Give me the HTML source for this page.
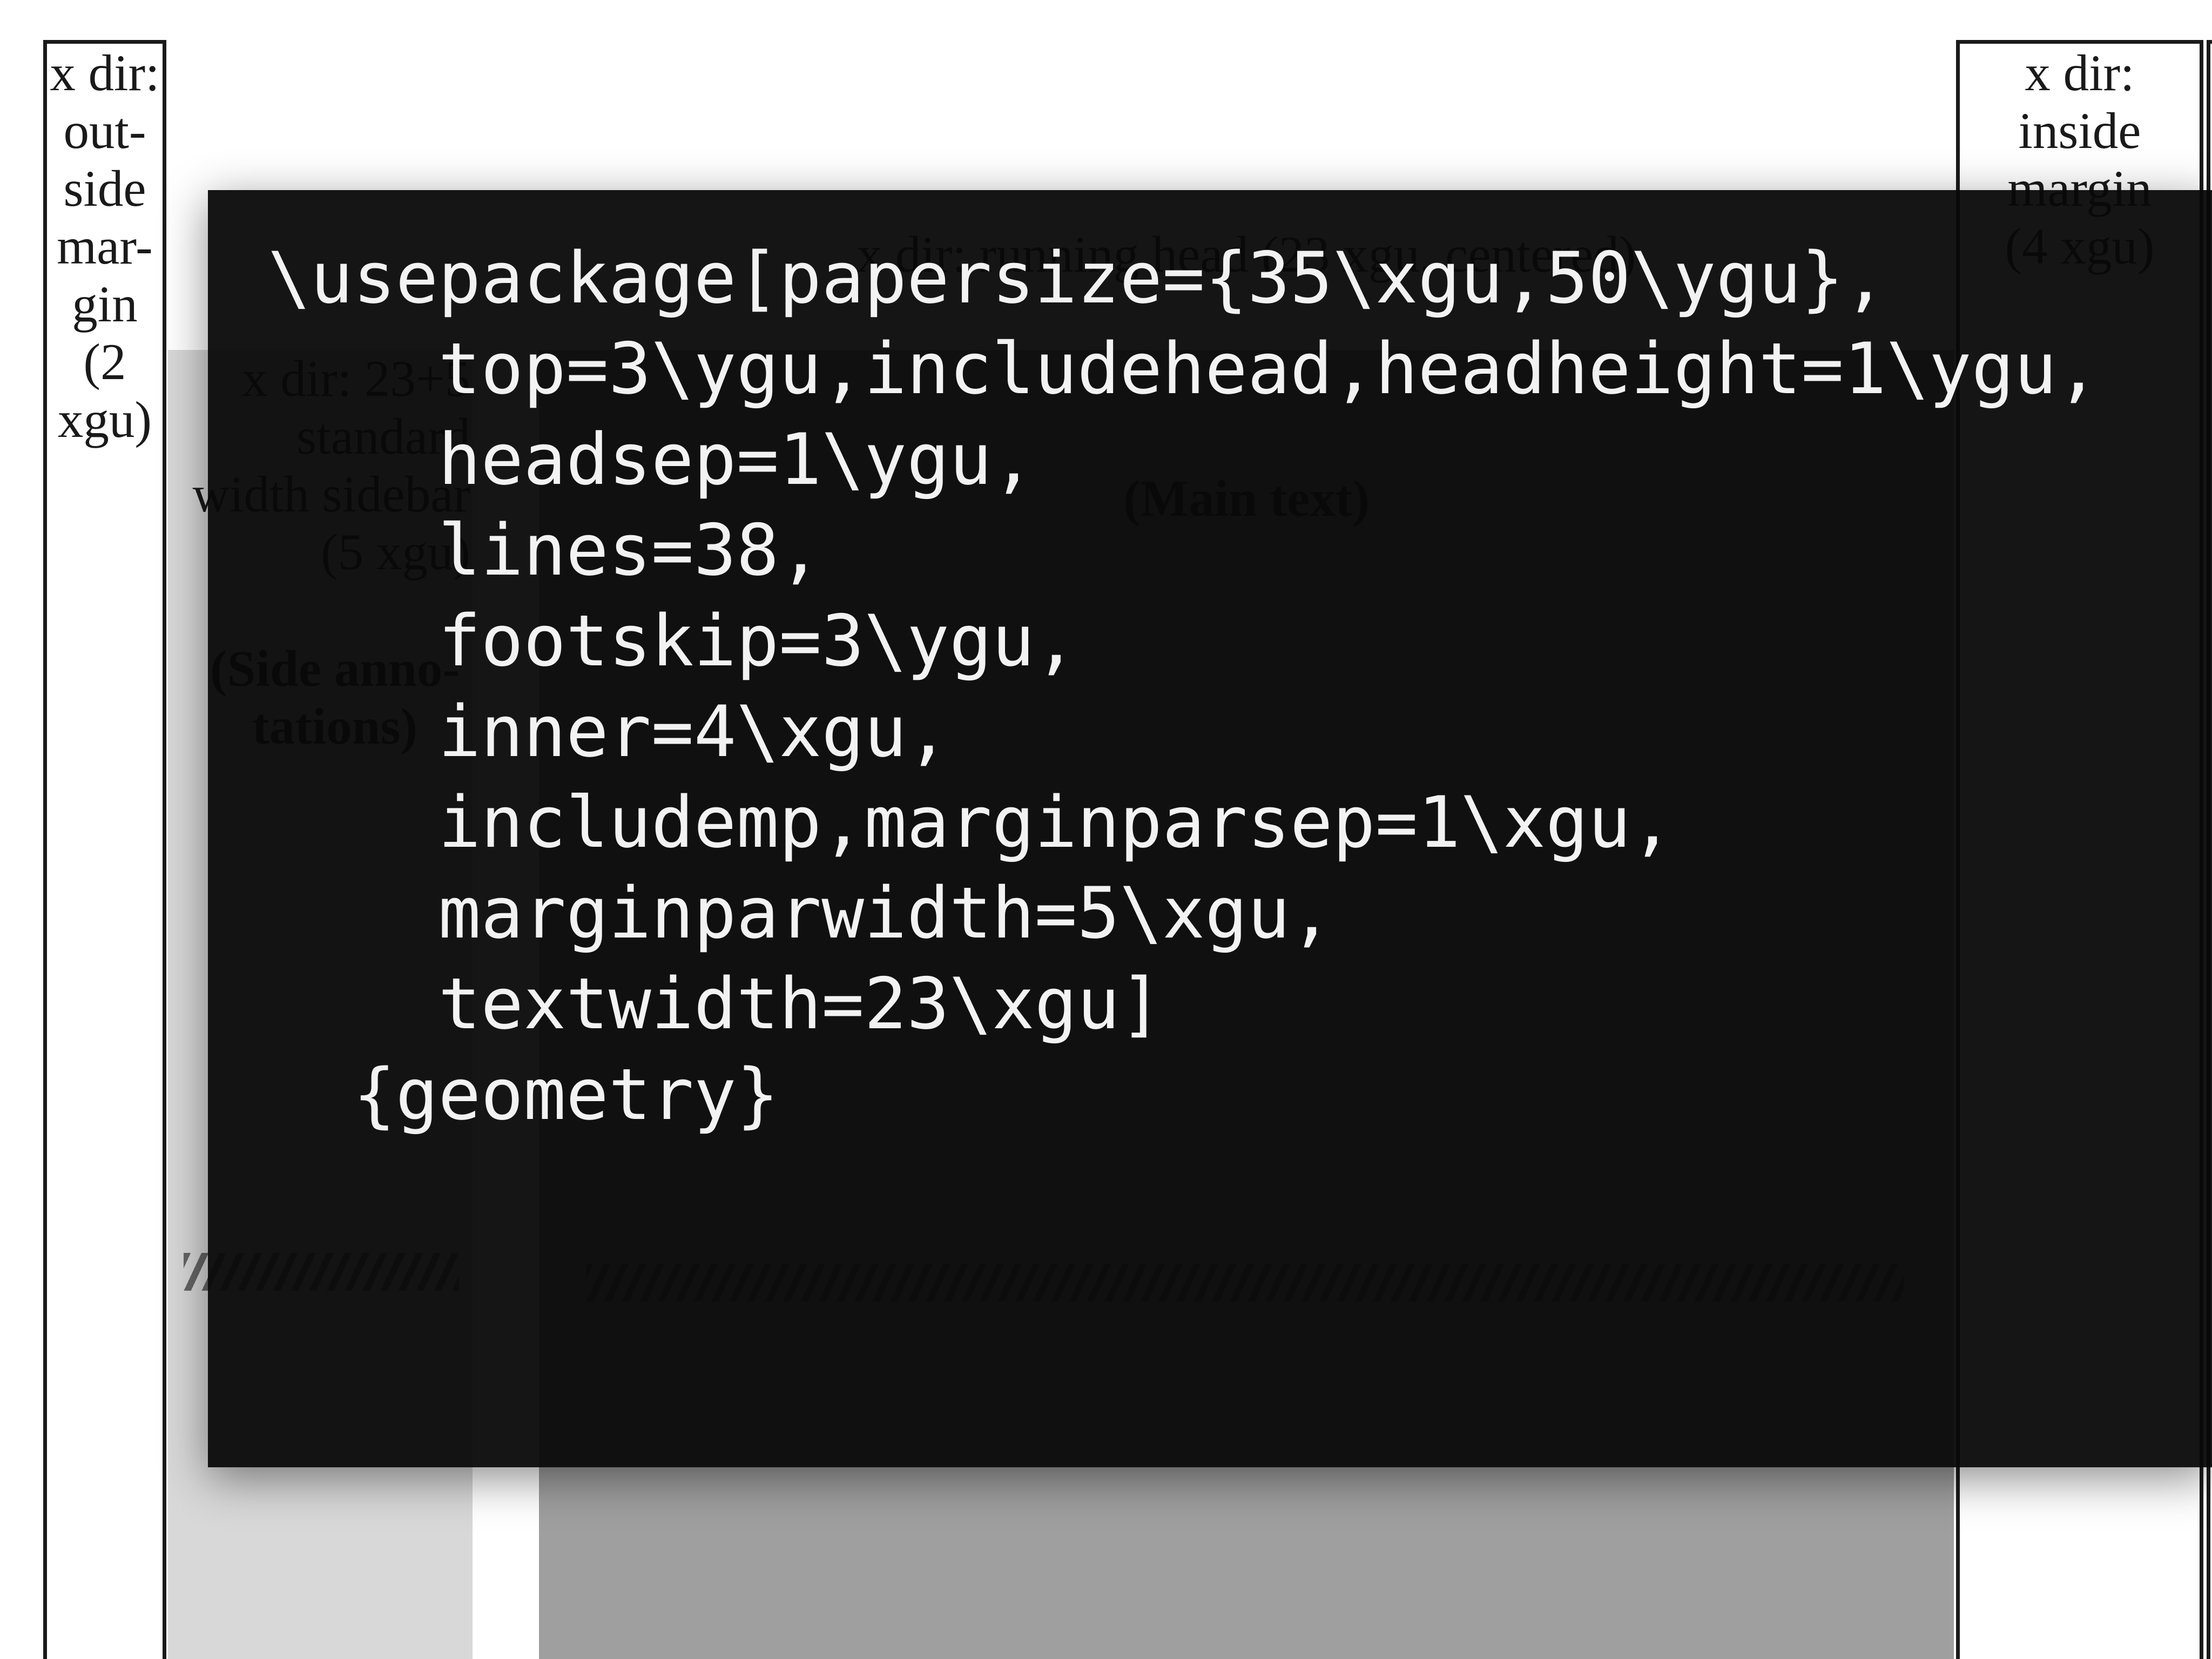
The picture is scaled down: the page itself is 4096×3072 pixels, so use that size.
<!DOCTYPE html>
<html><head><meta charset="utf-8"><style>
html,body{margin:0;padding:0;overflow:hidden;width:4096px;height:3072px}
body{position:relative;background:#fff;font-family:"Liberation Serif",serif;color:#1a1a1a}
.a{position:absolute}
.ser{font-size:95px;line-height:107px;text-align:center}
pre{margin:0;font-family:"DejaVu Sans Mono","Liberation Mono",monospace;font-size:131px;line-height:168px;color:#f2f2f2}
</style></head><body>
<div class="a" style="left:80px;top:74px;width:214px;height:3000px;border:7px solid #1a1a1a;border-bottom:none"></div>
<div class="a ser" style="left:80px;top:82px;width:228px">x dir:<br>out-<br>side<br>mar-<br>gin<br>(2<br>xgu)</div>

<div class="a" style="left:311px;top:648px;width:564px;height:2424px;background:#d8d8d8"></div>
<div class="a ser" style="left:311px;top:648px;width:560px;text-align:right">x dir: 23+5<br>standard<br>width sidebar<br>(5 xgu)</div>
<div class="a ser" style="left:360px;top:1185px;width:520px;font-weight:bold">(Side anno-<br>tations)</div>
<div class="a" style="left:340px;top:2320px;width:510px;height:70px;background:repeating-linear-gradient(115deg,#666 0 12px,transparent 12px 30px)"></div>

<div class="a" style="left:998px;top:648px;width:2620px;height:2424px;background:#9f9f9f"></div>
<div class="a ser" style="left:998px;top:418px;width:2620px">x dir: running head (23 xgu, centered)</div>
<div class="a ser" style="left:998px;top:870px;width:2620px;font-weight:bold">(Main text)</div>
<div class="a" style="left:1085px;top:2340px;width:2440px;height:70px;background:repeating-linear-gradient(115deg,#555 0 12px,transparent 12px 30px)"></div>

<div class="a" style="left:3622px;top:74px;width:444px;height:3000px;border:7px solid #1a1a1a;border-bottom:none"></div>
<div class="a" style="left:4086px;top:74px;width:10px;height:3000px;border-left:7px solid #1a1a1a;border-top:7px solid #1a1a1a"></div>
<div class="a ser" style="left:3622px;top:82px;width:458px">x dir:<br>inside<br>margin<br>(4 xgu)</div>

<div class="a" style="left:385px;top:352px;width:3711px;height:2365px;background:rgba(8,8,8,0.95);box-shadow:0 20px 80px rgba(0,0,0,0.45)"></div>
<pre class="a" style="left:496px;top:431px">\usepackage[papersize={35\xgu,50\ygu},
    top=3\ygu,includehead,headheight=1\ygu,
    headsep=1\ygu,
    lines=38,
    footskip=3\ygu,
    inner=4\xgu,
    includemp,marginparsep=1\xgu,
    marginparwidth=5\xgu,
    textwidth=23\xgu]
  {geometry}</pre>
</body></html>
